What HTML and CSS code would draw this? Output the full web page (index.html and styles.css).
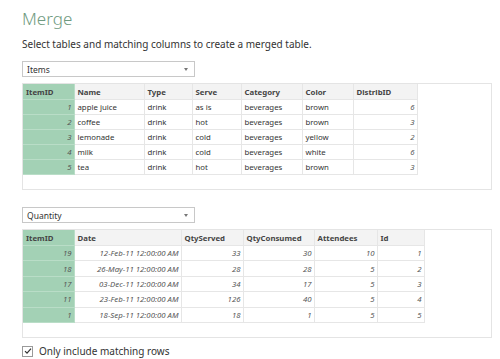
FILE: index.html
```html
<!DOCTYPE html>
<html lang="en">
<head>
    <meta charset="UTF-8">
    <title>Merge</title>
    <link rel="stylesheet" href="styles.css">
</head>
<body>
    <div class="dialog">
        <h1 class="title">Merge</h1>
        <p class="subtitle">Select tables and matching columns to create a merged table.</p>

        <div class="dropdown">
            <span>Items</span>
            <span class="arrow"></span>
        </div>
        <div class="preview preview-items">
            <table class="grid">
                <colgroup>
                    <col style="width:51px"><col style="width:70px"><col style="width:48px"><col style="width:49px">
                    <col style="width:61px"><col style="width:51px"><col style="width:64px">
                </colgroup>
                <tr class="head">
                    <th class="key">ItemID</th><th>Name</th><th>Type</th><th>Serve</th><th>Category</th><th>Color</th><th>DistribID</th>
                </tr>
                <tr><td class="key num">1</td><td>apple juice</td><td>drink</td><td>as is</td><td>beverages</td><td>brown</td><td class="num">6</td></tr>
                <tr><td class="key num">2</td><td>coffee</td><td>drink</td><td>hot</td><td>beverages</td><td>brown</td><td class="num">3</td></tr>
                <tr><td class="key num">3</td><td>lemonade</td><td>drink</td><td>cold</td><td>beverages</td><td>yellow</td><td class="num">2</td></tr>
                <tr><td class="key num">4</td><td>milk</td><td>drink</td><td>cold</td><td>beverages</td><td>white</td><td class="num">6</td></tr>
                <tr><td class="key num">5</td><td>tea</td><td>drink</td><td>hot</td><td>beverages</td><td>brown</td><td class="num">3</td></tr>
            </table>
        </div>

        <div class="dropdown second">
            <span>Quantity</span>
            <span class="arrow"></span>
        </div>
        <div class="preview preview-qty">
            <table class="grid">
                <colgroup>
                    <col style="width:51px"><col style="width:107px"><col style="width:62px"><col style="width:71px">
                    <col style="width:63px"><col style="width:47px">
                </colgroup>
                <tr class="head">
                    <th class="key">ItemID</th><th>Date</th><th>QtyServed</th><th>QtyConsumed</th><th>Attendees</th><th>Id</th>
                </tr>
                <tr><td class="key num">19</td><td class="num">12-Feb-11 12:00:00 AM</td><td class="num">33</td><td class="num">30</td><td class="num">10</td><td class="num">1</td></tr>
                <tr><td class="key num">18</td><td class="num">26-May-11 12:00:00 AM</td><td class="num">28</td><td class="num">28</td><td class="num">5</td><td class="num">2</td></tr>
                <tr><td class="key num">17</td><td class="num">03-Dec-11 12:00:00 AM</td><td class="num">34</td><td class="num">17</td><td class="num">5</td><td class="num">3</td></tr>
                <tr><td class="key num">11</td><td class="num">23-Feb-11 12:00:00 AM</td><td class="num">126</td><td class="num">40</td><td class="num">5</td><td class="num">4</td></tr>
                <tr><td class="key num">1</td><td class="num">18-Sep-11 12:00:00 AM</td><td class="num">18</td><td class="num">1</td><td class="num">5</td><td class="num">5</td></tr>
            </table>
        </div>

        <label class="option">
            <span class="checkbox">
                <svg width="8" height="8" viewBox="0 0 8 8"><path d="M1 4.2 L3 6.2 L7 1.6" fill="none" stroke="#333" stroke-width="1.2"/></svg>
            </span>
            Only include matching rows
        </label>
    </div>
</body>
</html>
```
FILE: styles.css
```css
body {
    margin: 0;
    background-color: #ffffff;
    font-family: "Noto Sans", "Open Sans", sans-serif;
    color: #333333;
}
.dialog {
    padding: 8px 8px 0 22px;
}
.title {
    margin: 0;
    font-size: 17px;
    font-weight: 300;
    color: #6f9a80;
    line-height: 22px;
}
.subtitle {
    margin: 7px 0 0 0;
    font-size: 10px;
    line-height: 14px;
    color: #333333;
}
.dropdown {
    width: 161px;
    height: 14px;
    margin-top: 10px;
    border: 1px solid #c8c8c8;
    display: flex;
    justify-content: space-between;
    align-items: center;
    padding: 0 6px 0 4px;
    font-size: 8.5px;
    color: #333;
}
.dropdown.second {
    margin-top: 17px;
}
.arrow {
    width: 0;
    height: 0;
    border-left: 2.5px solid transparent;
    border-right: 2.5px solid transparent;
    border-top: 3px solid #777;
}
.preview {
    width: 468px;
    border: 1px solid #e4e4e4;
    margin-top: 6px;
}
.preview-items {
    height: 105px;
}
.preview-qty {
    height: 107px;
}
.grid {
    border-collapse: collapse;
    table-layout: fixed;
    font-size: 7.8px;
}
.grid th,
.grid td {
    border: 1px solid #e6e6e6;
    padding: 0 2px 0 3px;
    height: 14px;
    white-space: nowrap;
    overflow: hidden;
    text-align: left;
    color: #333;
}
.preview-qty .grid td {
    height: 14.4px;
}
.grid tr:first-child th {
    border-top: none;
}
.grid th:first-child,
.grid td:first-child {
    border-left: none;
}
.head th {
    background-color: #f3f3f3;
    font-weight: bold;
    height: 15px;
    color: #444;
}
.grid .key {
    background-color: #a3d1b5;
    border-color: #b9ddc7;
}
.grid .num {
    text-align: right;
    font-style: italic;
    color: #555;
}
.option {
    display: flex;
    align-items: center;
    margin-top: 6px;
    font-size: 10px;
    color: #333;
}
.checkbox {
    width: 9px;
    height: 9px;
    border: 1px solid #9a9a9a;
    display: flex;
    align-items: center;
    justify-content: center;
    margin-right: 6px;
}
```
